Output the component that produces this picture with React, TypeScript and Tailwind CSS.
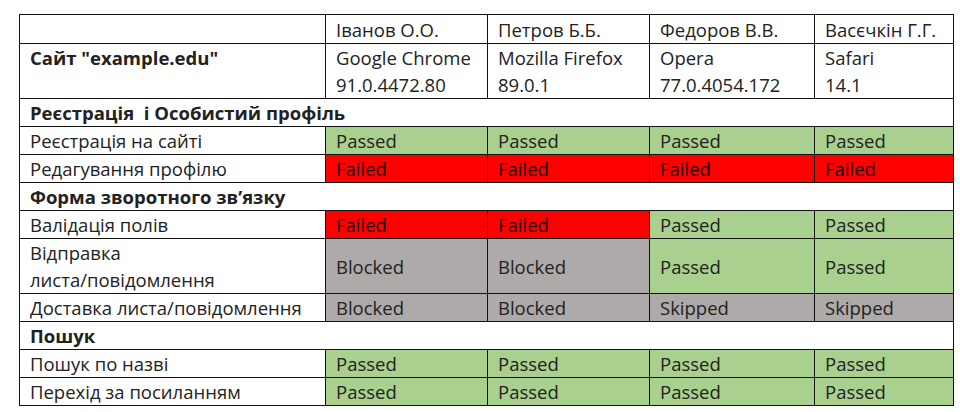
type Status = 'Passed' | 'Failed' | 'Blocked' | 'Skipped';

type Row =
  | { kind: 'section'; title: string }
  | { kind: 'test'; name: string[]; results: Status[] };

const rows: Row[] = [
  { kind: 'section', title: 'Реєстрація  і Особистий профіль' },
  { kind: 'test', name: ['Реєстрація на сайті'], results: ['Passed', 'Passed', 'Passed', 'Passed'] },
  { kind: 'test', name: ['Редагування профілю'], results: ['Failed', 'Failed', 'Failed', 'Failed'] },
  { kind: 'section', title: 'Форма зворотного зв’язку' },
  { kind: 'test', name: ['Валідація полів'], results: ['Failed', 'Failed', 'Passed', 'Passed'] },
  { kind: 'test', name: ['Відправка', 'листа/повідомлення'], results: ['Blocked', 'Blocked', 'Passed', 'Passed'] },
  { kind: 'test', name: ['Доставка листа/повідомлення'], results: ['Blocked', 'Blocked', 'Skipped', 'Skipped'] },
  { kind: 'section', title: 'Пошук' },
  { kind: 'test', name: ['Пошук по назві'], results: ['Passed', 'Passed', 'Passed', 'Passed'] },
  { kind: 'test', name: ['Перехід за посиланням'], results: ['Passed', 'Passed', 'Passed', 'Passed'] },
];

const testers = ['Іванов О.О.', 'Петров Б.Б.', 'Федоров В.В.', 'Васєчкін Г.Г.'];
const browsers = [
  ['Google Chrome', '91.0.4472.80'],
  ['Mozilla Firefox', '89.0.1'],
  ['Opera', '77.0.4054.172'],
  ['Safari', '14.1'],
];

const statusBg: Record<Status, string> = {
  Passed: 'bg-[#a9d08e]',
  Failed: 'bg-[#ff0000] text-[#1a0000]',
  Blocked: 'bg-[#aeaaaa]',
  Skipped: 'bg-[#aeaaaa]',
};

const cell = 'border border-[#111] pl-[10px] pr-0 py-0 align-middle whitespace-nowrap';

export default function App() {
  return (
    <div
      className="w-[960px] h-[412px] bg-white pt-[14px] pl-[19px] text-[#222] text-[18.5px] leading-[27px]"
      style={{ fontFamily: '"Open Sans", "Noto Sans", sans-serif' }}
    >
      <table className="border-collapse table-fixed w-[934px]">
        <colgroup>
          <col className="w-[306px]" />
          <col className="w-[162px]" />
          <col className="w-[162px]" />
          <col className="w-[165px]" />
          <col className="w-[139px]" />
        </colgroup>
        <tbody>
          <tr className="h-[29px]">
            <td className={cell}></td>
            {testers.map((t) => (
              <td key={t} className={cell}>{t}</td>
            ))}
          </tr>
          <tr>
            <td className={`${cell} align-top font-bold`}>Сайт "example.edu"</td>
            {browsers.map((b) => (
              <td key={b[0]} className={cell}>
                {b[0]}
                <br />
                {b[1]}
              </td>
            ))}
          </tr>
          {rows.map((row, i) =>
            row.kind === 'section' ? (
              <tr key={i}>
                <td colSpan={5} className={`${cell} font-bold whitespace-pre`}>{row.title}</td>
              </tr>
            ) : (
              <tr key={i}>
                <td className={cell}>
                  {row.name.map((n, k) => (
                    <div key={k}>{n}</div>
                  ))}
                </td>
                {row.results.map((r, j) => (
                  <td key={j} className={`${cell} ${statusBg[r]}`}>{r}</td>
                ))}
              </tr>
            )
          )}
        </tbody>
      </table>
    </div>
  );
}
